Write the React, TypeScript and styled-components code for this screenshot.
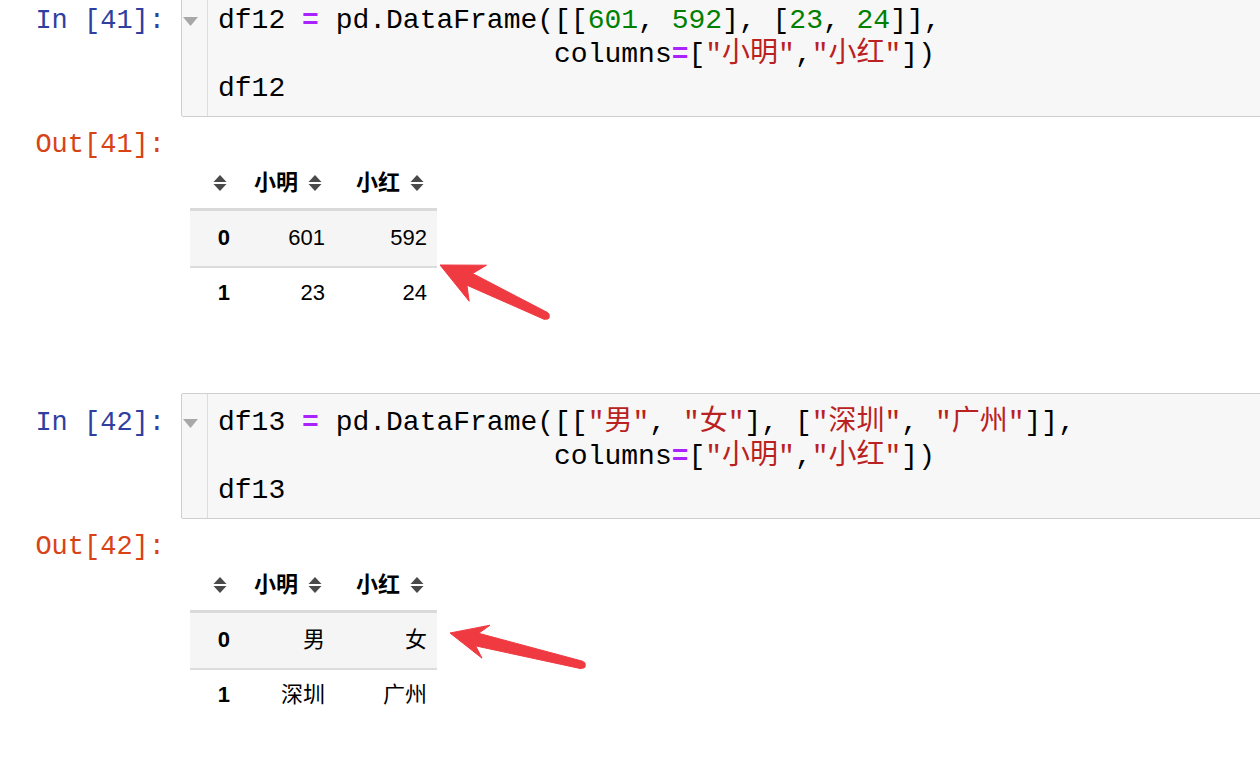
import React from "react";
import styled, { createGlobalStyle } from "styled-components";

const GlobalStyle = createGlobalStyle`
  *, *::before, *::after { box-sizing: border-box; }
  html, body { margin: 0; padding: 0; background: #ffffff; }
  body { font-family: "Liberation Sans", "Noto Sans CJK SC", sans-serif; }
`;

const Screen = styled.div`
  position: relative;
  width: 1260px;
  height: 758px;
  overflow: hidden;
  background: #ffffff;
`;

const Notebook = styled.div`
  margin-top: -9px;
  display: flex;
  flex-direction: column;
`;

const InputRow = styled.div`
  display: grid;
  grid-template-columns: 181px 1fr;
  margin-right: -12px;
`;

const OutputRow = styled.div`
  display: grid;
  grid-template-columns: 181px 1fr;
  padding: 11px 0 75px;
`;

const Prompt = styled.div<{ $out?: boolean }>`
  font-family: "Liberation Mono", monospace;
  font-size: 27px;
  line-height: 34px;
  color: ${(p) => (p.$out ? "#D84315" : "#303F9F")};
  text-align: right;
  padding-right: 16px;
  padding-top: ${(p) => (p.$out ? 0 : 13)}px;
  white-space: pre;
`;

const InputArea = styled.div`
  display: flex;
  border: 1px solid #cfcfcf;
  border-radius: 2px;
  background: #f7f7f7;
`;

const Gutter = styled.div`
  width: 26px;
  flex-shrink: 0;
  border-right: 1px solid #dddddd;
  padding-top: 24px;
  line-height: 0;
`;

const Code = styled.pre`
  margin: 0;
  padding: 12px 0 10px 10px;
  font-family: "Liberation Mono", "Noto Sans CJK SC", monospace;
  font-size: 28px;
  line-height: 34px;
  color: #000000;
  white-space: pre;
`;

const Tok = styled.span<{ $k: "op" | "num" | "str" }>`
  color: ${(p) => (p.$k === "op" ? "#AA22FF" : p.$k === "num" ? "#008000" : "#BA2121")};
  font-weight: ${(p) => (p.$k === "op" ? 700 : 400)};
`;

const OutputSubarea = styled.div`
  padding: 32px 0 0 9px;
`;

const DataTable = styled.table`
  border-collapse: separate;
  border-spacing: 0;
  table-layout: fixed;
  font-family: "Liberation Sans", "Noto Sans CJK SC", sans-serif;
  font-size: 22px;
  color: #000000;
`;

const HeadCell = styled.th<{ $w: number }>`
  width: ${(p) => p.$w}px;
  height: 51px;
  padding: 0 13px 4px 0;
  line-height: 20px;
  font-weight: 700;
  border-bottom: 3px solid #dadada;
  text-align: right;
  vertical-align: middle;
  white-space: nowrap;
`;

const HeadInner = styled.span`
  display: inline-flex;
  align-items: center;
  height: 20px;
  gap: 10px;
  vertical-align: middle;
`;

const BodyRow = styled.tr<{ $shade?: boolean }>`
  background: ${(p) => (p.$shade ? "#f5f5f5" : "transparent")};
  & > * {
    padding: ${(p) => (p.$shade ? "14px 10px 15px 0" : "12px 10px 12px 0")};
    border-bottom: ${(p) => (p.$shade ? "2px solid #dcdcdc" : "none")};
  }
`;

const IndexCell = styled.th`
  font-weight: 700;
  line-height: 26px;
  text-align: right;
`;

const ValueCell = styled.td`
  line-height: 26px;
  text-align: right;
  white-space: nowrap;
`;

const Overlay = styled.svg`
  position: absolute;
  left: 0;
  top: 0;
  pointer-events: none;
`;

const FoldMarker = () => (
  <svg width="17" height="12" viewBox="0 0 17 12">
    <polygon points="1,1 16,1 8.5,10" fill="#a8a8a8" />
  </svg>
);

const SortIcon = () => (
  <svg width="14" height="18" viewBox="0 0 14 18">
    <polygon points="0.5,8 7,1 13.5,8" fill="#4a4a4a" />
    <polygon points="0.5,10 13.5,10 7,17" fill="#4a4a4a" />
  </svg>
);

type Pt = [number, number];

function arrowPoints(tip: Pt, tail: Pt, headLen: number, headHalf: number, neckHalf: number, tailHalf: number) {
  const dx = tail[0] - tip[0];
  const dy = tail[1] - tip[1];
  const len = Math.hypot(dx, dy);
  const u: Pt = [dx / len, dy / len];
  const n: Pt = [-u[1], u[0]];
  const at = (a: number, b: number): Pt => [tip[0] + u[0] * a + n[0] * b, tip[1] + u[1] * a + n[1] * b];
  const pts: Pt[] = [
    [tip[0], tip[1]],
    at(headLen, headHalf),
    at(headLen - 9, neckHalf),
    at(len, tailHalf),
    at(len, -tailHalf),
    at(headLen - 9, -neckHalf),
    at(headLen, -headHalf),
  ];
  return pts.map((p) => `${p[0].toFixed(1)},${p[1].toFixed(1)}`).join(" ");
}

const Arrow = ({ tip, tail, head, half }: { tip: Pt; tail: Pt; head: number; half: number }) => (
  <g fill="#f03a42">
    <polygon points={arrowPoints(tip, tail, head, half, 6.5, 3.8)} strokeLinejoin="round" stroke="#f03a42" strokeWidth="1" />
    <circle cx={tail[0]} cy={tail[1]} r={3.8} />
  </g>
);

const InputCell = ({ n, lines }: { n: number; lines: React.ReactNode }) => (
  <InputRow>
    <Prompt>{`In [${n}]:`}</Prompt>
    <InputArea>
      <Gutter>
        <FoldMarker />
      </Gutter>
      <Code>{lines}</Code>
    </InputArea>
  </InputRow>
);

const OutputCell = ({ n, rows }: { n: number; rows: [string, string][] }) => (
  <OutputRow>
    <Prompt $out>{`Out[${n}]:`}</Prompt>
    <OutputSubarea>
      <DataTable>
        <thead>
          <tr>
            <HeadCell $w={50}>
              <HeadInner>
                <SortIcon />
              </HeadInner>
            </HeadCell>
            <HeadCell $w={95}>
              <HeadInner>
                小明
                <SortIcon />
              </HeadInner>
            </HeadCell>
            <HeadCell $w={102}>
              <HeadInner>
                小红
                <SortIcon />
              </HeadInner>
            </HeadCell>
          </tr>
        </thead>
        <tbody>
          {rows.map((r, i) => (
            <BodyRow key={i} $shade={i === 0}>
              <IndexCell>{i}</IndexCell>
              <ValueCell>{r[0]}</ValueCell>
              <ValueCell>{r[1]}</ValueCell>
            </BodyRow>
          ))}
        </tbody>
      </DataTable>
    </OutputSubarea>
  </OutputRow>
);

const pad = " ".repeat(20);

const code12 = (
  <>
    {"df12 "}
    <Tok $k="op">=</Tok>
    {" pd.DataFrame([["}
    <Tok $k="num">601</Tok>
    {", "}
    <Tok $k="num">592</Tok>
    {"], ["}
    <Tok $k="num">23</Tok>
    {", "}
    <Tok $k="num">24</Tok>
    {"]],\n"}
    {pad}
    {"columns"}
    <Tok $k="op">=</Tok>
    {"["}
    <Tok $k="str">"小明"</Tok>
    {","}
    <Tok $k="str">"小红"</Tok>
    {"])\n"}
    {"df12"}
  </>
);

const code13 = (
  <>
    {"df13 "}
    <Tok $k="op">=</Tok>
    {" pd.DataFrame([["}
    <Tok $k="str">"男"</Tok>
    {", "}
    <Tok $k="str">"女"</Tok>
    {"], ["}
    <Tok $k="str">"深圳"</Tok>
    {", "}
    <Tok $k="str">"广州"</Tok>
    {"]],\n"}
    {pad}
    {"columns"}
    <Tok $k="op">=</Tok>
    {"["}
    <Tok $k="str">"小明"</Tok>
    {","}
    <Tok $k="str">"小红"</Tok>
    {"])\n"}
    {"df13"}
  </>
);

export default function App() {
  return (
    <>
      <GlobalStyle />
      <Screen>
        <Notebook>
          <InputCell n={41} lines={code12} />
          <OutputCell
            n={41}
            rows={[
              ["601", "592"],
              ["23", "24"],
            ]}
          />
          <InputCell n={42} lines={code13} />
          <OutputCell
            n={42}
            rows={[
              ["男", "女"],
              ["深圳", "广州"],
            ]}
          />
        </Notebook>
        <Overlay width={1260} height={758} viewBox="0 0 1260 758">
          <Arrow tip={[440, 265]} tail={[546, 316]} head={42} half={20} />
          <Arrow tip={[450, 633]} tail={[582, 665]} head={37} half={17} />
        </Overlay>
      </Screen>
    </>
  );
}
